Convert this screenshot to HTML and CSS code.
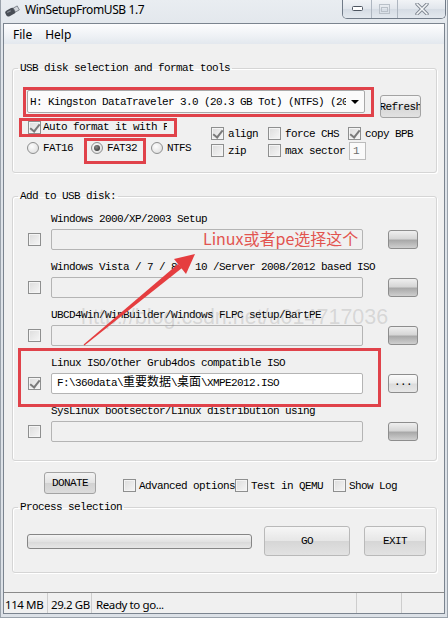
FILE: index.html
```html
<!DOCTYPE html>
<html lang="en">
<head>
	<meta charset="UTF-8">
	<title>WinSetupFromUSB 1.7</title>
	<link rel="stylesheet" href="styles.css">
</head>
<body>
	<div class="window">
		<div class="titlebar">
			<svg class="appicon" width="16" height="14" viewBox="0 0 16 14">
				<g transform="rotate(-28 8 7)">
					<rect x="1" y="4" width="10" height="6.5" rx="2.5" fill="#484d55"/>
					<rect x="10.5" y="5" width="4.5" height="4.5" fill="#d3d7dc" stroke="#6a7079" stroke-width=".7"/>
					<rect x="3" y="5.5" width="4" height="1.2" fill="#8a9099"/>
				</g>
			</svg>
			<div class="title">WinSetupFromUSB 1.7</div>
			<div class="caption">
				<div class="cbtn min">
					<svg width="11" height="6" viewBox="0 0 11 6"><rect x=".5" y=".5" width="10" height="4" rx="1" fill="#fff" stroke="#4d5560"/></svg>
				</div>
				<div class="cbtn max">
					<svg width="11" height="10" viewBox="0 0 11 10"><rect x=".5" y=".5" width="10" height="9" fill="none" stroke="#b9c0c8"/><rect x="2.5" y="3.5" width="6" height="4" fill="none" stroke="#b9c0c8"/></svg>
				</div>
				<div class="cbtn close">
					<svg width="14" height="12" viewBox="0 0 14 12"><path d="M2 1 L12 11 M12 1 L2 11" stroke="#7d858f" stroke-width="3.4" stroke-linecap="round"/><path d="M2 1 L12 11 M12 1 L2 11" stroke="#f4f6f8" stroke-width="1.6" stroke-linecap="round"/></svg>
				</div>
			</div>
		</div>

		<div class="client">
			<div class="menubar">
				<span class="menu">File</span>
				<span class="menu">Help</span>
			</div>

			<div class="main mono">
				<fieldset class="group g1">
					<legend>USB disk selection and format tools</legend>
					<div class="combo-row">
						<div class="combo">
							<span class="combo-text">H: Kingston DataTraveler 3.0 (20.3 GB Tot) (NTFS) (20.3 GB Free)</span>
							<span class="combo-arrow"></span>
						</div>
						<div class="btn refresh">Refresh</div>
					</div>
					<div class="opts">
						<div class="left-col">
							<div class="auto-row">
								<span class="cb on"></span>
								<span class="auto-label">Auto format it with FBinst</span>
							</div>
							<div class="fs-row">
								<div class="fs w16"><span class="radio"></span>FAT16</div>
								<div class="fs w32"><span class="radio on"></span>FAT32</div>
								<div class="fs"><span class="radio"></span>NTFS</div>
							</div>
						</div>
						<div class="right-col">
							<div class="ropt-row">
								<div class="ropt c1"><span class="cb on"></span>align</div>
								<div class="ropt c2"><span class="cb"></span>force CHS</div>
								<div class="ropt"><span class="cb on"></span>copy BPB</div>
							</div>
							<div class="ropt-row">
								<div class="ropt c1"><span class="cb"></span>zip</div>
								<div class="ropt"><span class="cb"></span>max sector<span class="num">1</span></div>
							</div>
						</div>
					</div>
				</fieldset>

				<fieldset class="group g2">
					<legend>Add to USB disk:</legend>
					<div class="src">
						<div class="src-label">Windows 2000/XP/2003 Setup</div>
						<div class="src-line"><span class="cb"></span><div class="path"></div><div class="sbtn"></div></div>
					</div>
					<div class="src">
						<div class="src-label">Windows Vista / 7 / 8 / 10 /Server 2008/2012 based ISO</div>
						<div class="src-line"><span class="cb"></span><div class="path"></div><div class="sbtn"></div></div>
					</div>
					<div class="src">
						<div class="src-label">UBCD4Win/WinBuilder/Windows FLPC setup/BartPE</div>
						<div class="src-line"><span class="cb"></span><div class="path"></div><div class="sbtn"></div></div>
					</div>
					<div class="src">
						<div class="src-label">Linux ISO/Other Grub4dos compatible ISO</div>
						<div class="src-line"><span class="cb on"></span><div class="path filled">F:\360data\<span class="cjk">重要数据</span>\<span class="cjk">桌面</span>\XMPE2012.ISO</div><div class="sbtn active">...</div></div>
					</div>
					<div class="src">
						<div class="src-label">SysLinux bootsector/Linux distribution using SysLinux/IsoLinux</div>
						<div class="src-line"><span class="cb"></span><div class="path"></div><div class="sbtn"></div></div>
					</div>
				</fieldset>

				<div class="extra-row">
					<div class="btn donate">DONATE</div>
					<div class="extra-opts">
						<div class="xopt x1"><span class="cb"></span>Advanced options</div>
						<div class="xopt x2"><span class="cb"></span>Test in QEMU</div>
						<div class="xopt"><span class="cb"></span>Show Log</div>
					</div>
				</div>

				<fieldset class="group g3">
					<legend>Process selection</legend>
					<div class="proc-row">
						<div class="progress"></div>
						<div class="btn go">GO</div>
						<div class="btn exit">EXIT</div>
					</div>
				</fieldset>
			</div>

			<div class="statusbar">
				<div class="panel p1">114 MB</div>
				<div class="panel p2">29.2 GB</div>
				<div class="panel p3">Ready to go...</div>
				<div class="panel p4"></div>
				<div class="panel p5"></div>
			</div>
		</div>

		<!-- annotations drawn on top of the screenshot -->
		<div class="mark mark-combo"></div>
		<div class="mark mark-auto"></div>
		<div class="mark mark-fat"></div>
		<div class="mark mark-linux"></div>
		<div class="note">Linux或者pe选择这个</div>
		<div class="watermark">http://blog.csdn.net/u014717036</div>
		<svg class="arrow" width="448" height="618" viewBox="0 0 448 618">
			<polygon points="82.6,344.6 83.4,345.4 181,268 177,264" fill="#e53d3f"/>
			<polygon points="194,254 173,259 185,274" fill="#e53d3f"/>
		</svg>
	</div>
</body>
</html>
```

FILE: styles.css
```css
*{
	margin: 0;
	padding: 0;
	box-sizing: border-box;
}
body{
	width: 448px;
	height: 618px;
	overflow: hidden;
	background: #dfe4ea;
}
.window{
	position: relative;
	width: 448px;
	height: 618px;
	display: flex;
	flex-direction: column;
	background: linear-gradient(to bottom, #e9edf1 0, #dfe4ea 40px, #dce1e7 100%);
	border-left: 1px solid #9aa2ab;
	border-right: 1px solid #9aa2ab;
	border-bottom: 1px solid #9aa2ab;
}

/* title bar */
.titlebar{
	height: 23px;
	display: flex;
	align-items: flex-start;
	font-family: "Noto Sans", "Open Sans", sans-serif;
	font-size: 12px;
}
.appicon{
	margin: 4px 0 0 3px;
}
.title{
	margin-left: 5px;
	line-height: 20px;
	letter-spacing: -0.4px;
	color: #000;
}
.caption{
	margin-left: auto;
	margin-right: 1px;
	display: flex;
	height: 19px;
	border: 1px solid #717b88;
	border-top: none;
	border-radius: 0 0 5px 5px;
	overflow: hidden;
}
.cbtn{
	display: flex;
	align-items: center;
	justify-content: center;
	background: linear-gradient(to bottom, #f1f3f6, #e1e6ec 50%, #d5dce4 51%, #e3e8ee);
}
.min{
	width: 29px;
	border-right: 1px solid #aeb6c0;
}
.max{
	width: 26px;
	border-right: 1px solid #aeb6c0;
}
.close{
	width: 47px;
}

/* client */
.client{
	flex: 1;
	margin: 0 2px 3px 2px;
	border: 1px solid #7b848f;
	background: #f0f0f0;
	display: flex;
	flex-direction: column;
}
.menubar{
	height: 20px;
	display: flex;
	align-items: center;
	background: linear-gradient(to bottom, #fdfdfe, #eef1f5 60%, #e3e8ee);
	font-family: "Noto Sans", "Open Sans", sans-serif;
	font-size: 12px;
}
.menu{
	margin-left: 6px;
	padding: 0 3px;
}
.menu + .menu{
	margin-left: 7px;
}

.mono{
	font-family: "Liberation Mono", "Noto Sans CJK SC", monospace;
	font-size: 11px;
	letter-spacing: -0.6px;
	color: #000;
}
.cjk{
	font-size: 12px;
	letter-spacing: 0;
}
.main{
	padding: 18px 7px 0 8px;
}

/* group boxes */
.group{
	width: 425px;
	border: 1px solid #d5d5d5;
	border-radius: 3px;
	box-shadow: inset 1px 1px 0 #fff, 1px 1px 0 #fff;
	padding: 0;
	min-width: 0;
}
.group legend{
	margin-left: 5px;
	padding: 0 2px;
	line-height: 12px;
}
.g1{
	padding-bottom: 13px;
}
.g2{
	margin-top: 17px;
	padding-bottom: 18px;
}
.g3{
	margin-top: 7px;
	padding-bottom: 16px;
}

/* check boxes and radios */
.cb{
	position: relative;
	display: inline-block;
	flex: none;
	width: 13px;
	height: 13px;
	border: 1px solid #8e8f8f;
	background: linear-gradient(135deg, #dcdcdc, #f6f6f6);
	box-shadow: inset 0 0 0 1px #f4f4f4;
}
.cb.on::after{
	content: "";
	position: absolute;
	left: 3px;
	top: 0;
	width: 4px;
	height: 8px;
	border: solid #7a7a7a;
	border-width: 0 2px 2px 0;
	transform: rotate(38deg);
}
.radio{
	position: relative;
	display: inline-block;
	flex: none;
	width: 12px;
	height: 12px;
	margin-right: 4px;
	border: 1px solid #8e8f8f;
	border-radius: 50%;
	background: radial-gradient(circle at 40% 35%, #fdfdfd, #d9d9d9);
}
.radio.on::after{
	content: "";
	position: absolute;
	left: 2px;
	top: 2px;
	width: 6px;
	height: 6px;
	border-radius: 50%;
	background: radial-gradient(circle at 40% 35%, #8c8c8c, #222);
}

/* buttons */
.btn{
	display: flex;
	align-items: center;
	justify-content: center;
	border: 1px solid #a3a3a3;
	border-radius: 3px;
	background: linear-gradient(to bottom, #f6f6f6, #e6e6e6 50%, #d6d6d6 51%, #e2e2e2);
	overflow: hidden;
	white-space: nowrap;
}

/* group 1 */
.combo-row{
	display: flex;
	align-items: flex-start;
	margin-top: 16px;
}
.combo{
	display: flex;
	align-items: center;
	margin-left: 14px;
	width: 338px;
	height: 23px;
	border: 1px solid #a9a9a9;
	border-radius: 2px;
	background: #fbfbfb;
}
.combo-text{
	margin-left: 2px;
	width: 316px;
	overflow: hidden;
	white-space: nowrap;
}
.combo-arrow{
	margin-left: 5px;
	width: 0;
	height: 0;
	border-left: 4px solid transparent;
	border-right: 4px solid transparent;
	border-top: 4px solid #000;
}
.refresh{
	margin: 5px 0 0 15px;
	width: 41px;
	height: 23px;
}
.opts{
	display: flex;
}
.left-col{
	margin-left: 14px;
	width: 184px;
}
.auto-row{
	height: 18px;
	display: flex;
	align-items: center;
}
.auto-row .cb{
	margin-left: 1px;
}
.auto-label{
	margin-left: 2px;
	width: 124px;
	overflow: hidden;
	white-space: nowrap;
}
.fs-row{
	margin-top: 3px;
	height: 18px;
	display: flex;
	align-items: center;
}
.fs{
	display: flex;
	align-items: center;
}
.w16{
	width: 64px;
}
.w32{
	width: 60px;
}
.right-col{
	padding-top: 7px;
}
.ropt-row{
	height: 17px;
	display: flex;
	align-items: center;
}
.ropt{
	display: flex;
	align-items: center;
	white-space: nowrap;
}
.ropt .cb{
	margin-right: 4px;
}
.c1{
	width: 57px;
}
.c2{
	width: 80px;
}
.num{
	margin-left: 4px;
	width: 17px;
	height: 18px;
	padding-left: 3px;
	line-height: 16px;
	border: 1px solid #bcbcbc;
	background: #fafafa;
	color: #6d6d6d;
}

/* group 2 */
.src{
	margin-top: 9px;
}
.src-label{
	margin-left: 38px;
	width: 340px;
	height: 14px;
	line-height: 16px;
}
.src-line{
	position: relative;
	margin-top: 4px;
	height: 21px;
	display: flex;
	align-items: center;
}
.src-line .cb{
	margin-left: 15px;
}
.path{
	margin-left: 10px;
	width: 312px;
	height: 21px;
	padding-left: 5px;
	line-height: 19px;
	border: 1px solid #b4b4b4;
	border-radius: 2px;
	background: #f0f0f0;
	white-space: nowrap;
}
.path.filled{
	background: #fff;
}
.sbtn{
	margin-left: 25px;
	width: 30px;
	height: 19px;
	border: 1px solid #8d8d8d;
	border-radius: 3px;
	background: linear-gradient(to bottom, #efefef, #d6d6d6 45%, #a9a9a9 55%, #cfcfcf);
	text-align: center;
	line-height: 15px;
}
.sbtn.active{
	background: linear-gradient(to bottom, #fbfbfb, #ececec 45%, #dcdcdc 55%, #e8e8e8);
}

/* donate / options */
.extra-row{
	margin-top: 11px;
	display: flex;
	align-items: flex-start;
}
.donate{
	margin-left: 32px;
	width: 52px;
	height: 22px;
	background: linear-gradient(to bottom, #f3f3f3, #e3e3e3 50%, #d2d2d2 51%, #dcdcdc);
}
.extra-opts{
	margin: 7px 0 0 27px;
	display: flex;
}
.xopt{
	display: flex;
	align-items: center;
	height: 13px;
	white-space: nowrap;
}
.xopt .cb{
	margin-right: 3px;
}
.x1{
	width: 112px;
}
.x2{
	width: 98px;
}

/* process */
.proc-row{
	margin-top: 13px;
	display: flex;
	align-items: center;
}
.progress{
	margin-left: 14px;
	width: 225px;
	height: 15px;
	border: 1px solid #858585;
	border-radius: 3px;
	background: linear-gradient(to bottom, #f3f3f3, #e2e2e2 50%, #d8d8d8 51%, #e6e6e6);
}
.go{
	margin-left: 12px;
	width: 86px;
	height: 30px;
	border-color: #b9b9b9;
}
.exit{
	margin-left: 14px;
	width: 62px;
	height: 30px;
	border-color: #b9b9b9;
}

/* status bar */
.statusbar{
	margin-top: auto;
	height: 21px;
	border-top: 1px solid #8a8a8a;
	display: flex;
	font-family: "Noto Sans", "Open Sans", sans-serif;
	font-size: 11.5px;
	letter-spacing: -0.4px;
	line-height: 23px;
}
.panel{
	height: 100%;
	border-right: 1px solid #cdcdcd;
	white-space: nowrap;
	overflow: hidden;
}
.p1{
	width: 44px;
	padding-left: 1px;
}
.p2{
	width: 44px;
	padding-left: 3px;
}
.p3{
	width: 265px;
	padding-left: 4px;
}
.p4{
	width: 45px;
}
.p5{
	flex: 1;
	border-right: none;
}

/* annotations */
.mark{
	position: absolute;
	border: 3px solid #e0424a;
}
.mark-combo{
	left: 22px;
	top: 87px;
	width: 351px;
	height: 30px;
}
.mark-auto{
	left: 18px;
	top: 118px;
	width: 158px;
	height: 19px;
}
.mark-fat{
	left: 83px;
	top: 138px;
	width: 62px;
	height: 26px;
}
.mark-linux{
	left: 17px;
	top: 348px;
	width: 363px;
	height: 59px;
}
.note{
	position: absolute;
	left: 202px;
	top: 228px;
	font-family: "Noto Sans CJK SC", "Noto Sans", sans-serif;
	font-size: 16px;
	line-height: 20px;
	color: #e2544f;
}
.watermark{
	position: absolute;
	left: 80px;
	top: 305px;
	font-family: "Liberation Sans", sans-serif;
	font-size: 21.5px;
	line-height: 24px;
	color: rgba(110, 110, 110, 0.2);
	white-space: nowrap;
}
.arrow{
	position: absolute;
	left: 0;
	top: 0;
	pointer-events: none;
}
```
